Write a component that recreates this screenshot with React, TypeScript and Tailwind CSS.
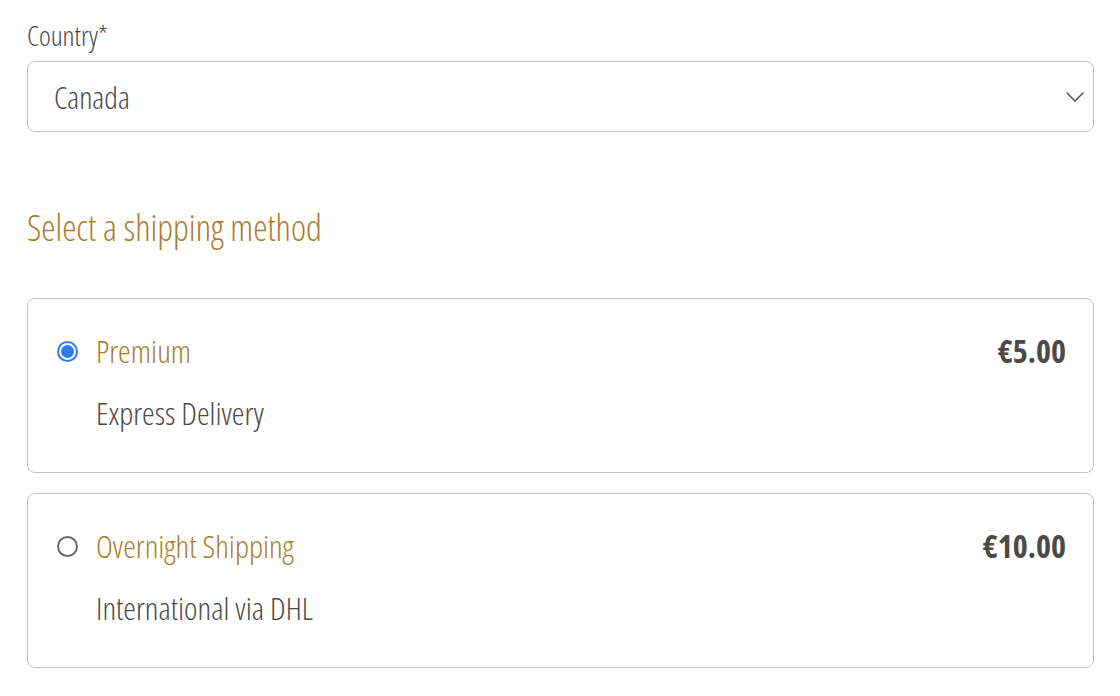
const methods = [
  { id: "premium", name: "Premium", desc: "Express Delivery", price: "€5.00", checked: true },
  { id: "overnight", name: "Overnight Shipping", desc: "International via DHL", price: "€10.00", checked: false },
];

export default function App() {
  return (
    <main
      className="min-h-screen bg-white pl-[27px] pr-[26px] pt-[19px] text-[#4a4a4a]"
      style={{ fontFamily: '"Open Sans", "DejaVu Sans Condensed", sans-serif', fontStretch: "75%" }}
    >
      <label className="block text-[28px] font-light leading-[32px]">Country*</label>

      <div className="mt-[10px] flex h-[71px] items-center justify-between rounded-[8px] border border-[#c2c2c2] pl-[26px] pr-[7px]">
        <span className="mt-[2px] text-[31px] font-light">Canada</span>
        <svg width="20" height="12" viewBox="0 0 20 12" fill="none" className="mr-[1px]">
          <path d="M2 2l8 8 8-8" stroke="#555" strokeWidth="1.6" strokeLinecap="round" strokeLinejoin="round" />
        </svg>
      </div>

      <h2 className="mt-[68px] text-[36px] font-light leading-[56px] text-[#ad7c2a]">
        Select a shipping method
      </h2>

      <div className="mt-[42px] flex flex-col gap-[20px]">
        {methods.map((m) => (
          <div
            key={m.id}
            className="flex h-[175px] items-start justify-between rounded-[8px] border border-[#c2c2c2] pl-[27px] pr-[27px] pt-[33px]"
          >
            <div className="flex items-start">
              <div className="flex h-[38px] w-[24px] items-center justify-center">
                {m.checked ? (
                  <span className="flex h-[21px] w-[21px] items-center justify-center rounded-full border-[2px] border-[#2f7bf5]">
                    <span className="h-[13px] w-[13px] rounded-full bg-[#2f7bf5]" />
                  </span>
                ) : (
                  <span className="h-[21px] w-[21px] rounded-full border-[2px] border-[#6a6a6a]" />
                )}
              </div>
              <div className="ml-[17px]">
                <div className="text-[32px] font-light leading-[38px] text-[#ad7c2a]">{m.name}</div>
                <div className="mt-[24px] text-[32px] font-light leading-[38px]">{m.desc}</div>
              </div>
            </div>
            <div className="text-[32px] font-bold leading-[38px] text-[#4a4a4a]">{m.price}</div>
          </div>
        ))}
      </div>
    </main>
  );
}
